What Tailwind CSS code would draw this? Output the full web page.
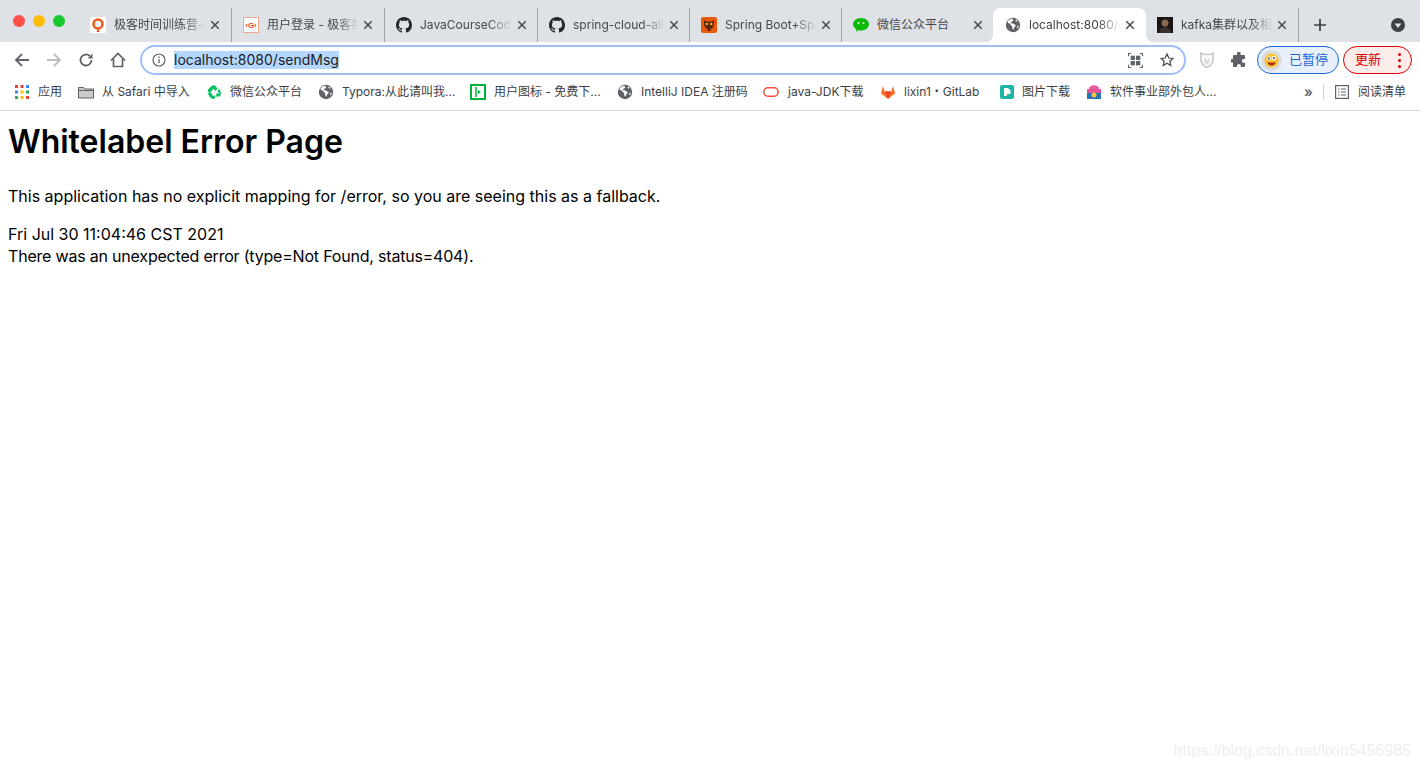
<!DOCTYPE html>
<html lang="en">
	<head>
		<meta charset="UTF-8" />
		<title>localhost:8080/sendMsg</title>
		<script src="https://cdn.jsdelivr.net/npm/@tailwindcss/browser@4"></script>
	</head>
	<body class="bg-white overflow-hidden font-['Inter','Noto_Sans_CJK_SC',sans-serif]">
		<svg class="hidden">
			<symbol id="gh" viewBox="0 0 16 16"><path fill="#24292e" d="M8 0C3.58 0 0 3.58 0 8c0 3.54 2.29 6.53 5.47 7.59.4.07.55-.17.55-.38 0-.19-.01-.82-.01-1.49-2.01.37-2.53-.49-2.69-.94-.09-.23-.48-.94-.82-1.13-.28-.15-.68-.52-.01-.53.63-.01 1.08.58 1.23.82.72 1.21 1.87.87 2.33.66.07-.52.28-.87.51-1.07-1.78-.2-3.64-.89-3.64-3.95 0-.87.31-1.59.82-2.15-.08-.2-.36-1.02.08-2.12 0 0 .67-.21 2.2.82.64-.18 1.32-.27 2-.27s1.36.09 2 .27c1.53-1.04 2.2-.82 2.2-.82.44 1.1.16 1.92.08 2.12.51.56.82 1.27.82 2.15 0 3.07-1.87 3.75-3.65 3.95.29.25.54.73.54 1.48 0 1.07-.01 1.93-.01 2.2 0 .21.15.46.55.38A8.01 8.01 0 0 0 16 8c0-4.42-3.58-8-8-8z"/></symbol>
			<symbol id="globe" viewBox="0 0 16 16"><circle cx="8" cy="8" r="7.2" fill="#5f6368"/><path fill="#fff" d="M7.2 1.6C5.2 2 3.4 3.2 2.3 5l1.3 1.3 1.6.3.4 1.5 1.4 1 .2 1.8.8 1.6.8-.2.2-1.6 1.4-1.4.3-1.3-1.7-.8-1.2-.9-1.4.1-.5-.9.9-1 1-.2.4-1.2-.9-1zM11 2.400l-.7 1.300 1 .9 1.200-.3-.200-.8zM13.400 8.500l-1 .5-.2 1.500.8 1.100c.5-1 .7-2 .6-3.100z"/></symbol>
			<symbol id="close" viewBox="0 0 10 10"><path d="M1.300 1.300l7.400 7.400M8.700 1.300L1.300 8.700" stroke="#45484d" stroke-width="1.500" fill="none"/></symbol>
		</svg>

		<!-- tab strip -->
		<div class="h-[42px] bg-[#dee1e6] flex items-end relative">
			<div class="w-[78px] h-full flex items-start gap-2 pl-[13px] pt-[15px] shrink-0">
				<span class="w-3 h-3 rounded-full bg-[#ff4f4a]"></span>
				<span class="w-3 h-3 rounded-full bg-[#ffbd05]"></span>
				<span class="w-3 h-3 rounded-full bg-[#19c82f]"></span>
			</div>

			<div class="w-[154px] h-[34px] flex items-center pl-3 pr-[11px] border-r border-[#9ea1a6] text-xs text-[#45484d]">
				<svg class="w-4 h-4 shrink-0" viewBox="0 0 16 16"><rect width="16" height="16" fill="#fff"/><circle cx="8" cy="7" r="4.500" fill="none" stroke="#f05a1a" stroke-width="2.600"/><path d="M6.500 15l1.500-5 1.500 5z" fill="#f05a1a"/></svg>
				<span class="ml-2 w-[92px] whitespace-nowrap overflow-hidden [mask-image:linear-gradient(90deg,#000_75%,transparent)]">极客时间训练营-大数据</span>
				<svg class="w-[10px] h-[10px] ml-auto"><use href="#close"/></svg>
			</div>
			<div class="w-[153px] h-[34px] flex items-center pl-[11px] pr-[11px] border-r border-[#9ea1a6] text-xs text-[#45484d]">
				<svg class="w-4 h-4 shrink-0" viewBox="0 0 16 16"><rect x=".5" y=".5" width="15" height="15" fill="#fff" stroke="#f2a88c"/><text x="8" y="11" text-anchor="middle" font-size="8" font-weight="700" fill="#d9411e" font-family="Liberation Sans">‹G›</text></svg>
				<span class="ml-2 w-[92px] whitespace-nowrap overflow-hidden [mask-image:linear-gradient(90deg,#000_75%,transparent)]">用户登录 - 极客邦科技</span>
				<svg class="w-[10px] h-[10px] ml-auto"><use href="#close"/></svg>
			</div>
			<div class="w-[153px] h-[34px] flex items-center pl-[11px] pr-[10px] border-r border-[#9ea1a6] text-xs text-[#45484d]">
				<svg class="w-4 h-4 shrink-0"><use href="#gh"/></svg>
				<span class="ml-2 w-[92px] whitespace-nowrap overflow-hidden [mask-image:linear-gradient(90deg,#000_75%,transparent)]">JavaCourseCodes</span>
				<svg class="w-[10px] h-[10px] ml-auto"><use href="#close"/></svg>
			</div>
			<div class="w-[152px] h-[34px] flex items-center pl-[11px] pr-[10px] border-r border-[#9ea1a6] text-xs text-[#45484d]">
				<svg class="w-4 h-4 shrink-0"><use href="#gh"/></svg>
				<span class="ml-2 w-[92px] whitespace-nowrap overflow-hidden [mask-image:linear-gradient(90deg,#000_75%,transparent)]">spring-cloud-alibaba</span>
				<svg class="w-[10px] h-[10px] ml-auto"><use href="#close"/></svg>
			</div>
			<div class="w-[152px] h-[34px] flex items-center pl-[11px] pr-[10px] border-r border-[#9ea1a6] text-xs text-[#45484d]">
				<svg class="w-4 h-4 shrink-0" viewBox="0 0 16 16"><rect width="16" height="16" rx="2" fill="#e8590c"/><path d="M3 3l2 1.500h6L13 3v5l-1.500 3-2 1v2H6.500v-2l-2-1L3 8z" fill="#5a2a0a"/><circle cx="5.800" cy="7" r="1.300" fill="#f5a623"/><circle cx="10.200" cy="7" r="1.300" fill="#f5a623"/></svg>
				<span class="ml-2 w-[92px] whitespace-nowrap overflow-hidden [mask-image:linear-gradient(90deg,#000_75%,transparent)]">Spring Boot+Spring</span>
				<svg class="w-[10px] h-[10px] ml-auto"><use href="#close"/></svg>
			</div>
			<div class="w-[151px] h-[34px] flex items-center pl-[11px] pr-[10px] text-xs text-[#45484d]">
				<svg class="w-4 h-4 shrink-0" viewBox="0 0 16 16"><path fill="#09bb07" d="M8 1c4.400 0 8 2.800 8 6.300s-3.600 6.300-8 6.300c-.9 0-1.800-.1-2.600-.4L3 14.800l.4-2.600C1.300 11 0 9.300 0 7.300 0 3.800 3.600 1 8 1z"/><circle cx="5.500" cy="6" r="1" fill="#fff"/><circle cx="10.500" cy="6" r="1" fill="#fff"/></svg>
				<span class="ml-2 w-[92px] whitespace-nowrap overflow-hidden">微信公众平台</span>
				<svg class="w-[10px] h-[10px] ml-auto"><use href="#close"/></svg>
			</div>
			<!-- active tab -->
			<div class="relative w-[153px] h-[34px] flex items-center pl-3 pr-[11px] bg-white rounded-t-lg text-xs text-[#3c4043]">
				<span class="absolute -left-2 bottom-0 w-2 h-2 bg-[radial-gradient(circle_at_0_0,#dee1e6_8px,#fff_8.500px)]"></span>
				<span class="absolute -right-2 bottom-0 z-10 w-2 h-2 bg-[radial-gradient(circle_at_100%_0,#dee1e6_8px,#fff_8.500px)]"></span>
				<svg class="w-4 h-4 shrink-0"><use href="#globe"/></svg>
				<span class="ml-2 w-[92px] whitespace-nowrap overflow-hidden [mask-image:linear-gradient(90deg,#000_75%,transparent)]">localhost:8080/sendMsg</span>
				<svg class="w-[10px] h-[10px] ml-auto"><use href="#close"/></svg>
			</div>
			<div class="w-[153px] h-[34px] flex items-center pl-[11px] pr-[11px] border-r border-[#9ea1a6] text-xs text-[#45484d]">
				<svg class="w-4 h-4 shrink-0" viewBox="0 0 16 16"><rect width="16" height="16" fill="#1a1512"/><circle cx="8" cy="6" r="3.500" fill="#8a6a55"/><path d="M2 16c0-4 3-6 6-6s6 2 6 6z" fill="#3a3230"/></svg>
				<span class="ml-2 w-[92px] whitespace-nowrap overflow-hidden [mask-image:linear-gradient(90deg,#000_75%,transparent)]">kafka集群以及相关配置</span>
				<svg class="w-[10px] h-[10px] ml-auto"><use href="#close"/></svg>
			</div>
			<div class="h-[34px] flex items-center pl-[15px]">
				<svg class="w-3 h-3" viewBox="0 0 12 12"><path d="M6 0v12M0 6h12" stroke="#3c4043" stroke-width="1.700"/></svg>
			</div>
			<div class="h-[34px] flex items-center ml-auto pr-[14px]">
				<svg class="w-4 h-4" viewBox="0 0 16 16"><circle cx="8" cy="8" r="7" fill="#3c4043"/><path d="M4.500 6.500h7L8 11z" fill="#dee1e6"/></svg>
			</div>
		</div>

		<!-- toolbar -->
		<div class="h-[36px] flex items-center bg-white">
			<div class="w-[140px] flex items-center shrink-0 pl-[14px]">
				<svg class="w-4 h-4" viewBox="0 0 16 16"><path d="M15 8H2M8 2L2 8l6 6" fill="none" stroke="#5f6368" stroke-width="1.800"/></svg>
				<svg class="w-4 h-4 ml-4" viewBox="0 0 16 16"><path d="M1 8h13M8 2l6 6-6 6" fill="none" stroke="#babcbe" stroke-width="1.800"/></svg>
				<svg class="w-4 h-4 ml-4" viewBox="0 0 16 16"><path d="M13.500 8A5.500 5.500 0 1 1 11.800 4" fill="none" stroke="#5f6368" stroke-width="1.800"/><path d="M9.500 6.500h5v-5z" fill="#5f6368"/></svg>
				<svg class="w-4 h-4 ml-4" viewBox="0 0 16 16"><path d="M1 8.500L8 1.500l7 7M3.500 7v7.500h9V7" fill="none" stroke="#5f6368" stroke-width="1.700"/></svg>
			</div>
			<div class="w-[1046px] h-[30px] rounded-full border-2 border-[#a0bff7] flex items-center pl-[10px] pr-[10px] shrink-0">
				<svg class="w-[14px] h-[14px]" viewBox="0 0 14 14"><circle cx="7" cy="7" r="6" fill="none" stroke="#5f6368" stroke-width="1.200"/><path d="M7 6v4.200M7 3.500v1.400" stroke="#5f6368" stroke-width="1.300"/></svg>
				<span class="ml-[8px] bg-[#b3d7ff] text-[#202124] text-sm leading-[18px] w-[165px] whitespace-nowrap">localhost:8080/sendMsg</span>
				<svg class="w-[15px] h-[15px] ml-auto" viewBox="0 0 14 14"><path d="M.5 3V.5H3M11 .5h2.500V3M13.500 11v2.500H11M3 13.500H.5V11" fill="none" stroke="#5f6368"/><rect x="2.500" y="2.500" width="4" height="4" fill="#5f6368"/><rect x="7.500" y="2.500" width="4" height="4" fill="#5f6368"/><rect x="2.500" y="7.500" width="4" height="4" fill="#5f6368"/><rect x="7.500" y="7.500" width="4" height="4" fill="#5f6368"/></svg>
				<svg class="w-[14px] h-[14px] ml-[17px]" viewBox="0 0 14 14"><path d="M7 1l1.800 4 4.200.4-3.200 2.800 1 4.300L7 10.200 3.200 12.500l1-4.300L1 5.400 5.200 5z" fill="none" stroke="#45484d" stroke-width="1.200"/></svg>
			</div>
			<svg class="w-[14px] h-4 ml-[14px]" viewBox="0 0 14 16"><path d="M1 1l3 1.500h6L13 1v8l-3 5-3 1.500L4 14 1 9z" fill="none" stroke="#c4c7ca" stroke-width="1.600"/><path d="M4 5l3 3 3-3v5l-3 3-3-3z" fill="#dcdee0"/></svg>
			<svg class="w-4 h-4 ml-[17px]" viewBox="0 0 16 16"><path fill="#5f6368" d="M6 1.500a1.800 1.800 0 0 1 3.600 0V3H13a1 1 0 0 1 1 1v3h-1.200a1.900 1.900 0 0 0 0 3.800H14V14a1 1 0 0 1-1 1H9.800v-1.200a1.900 1.900 0 0 0-3.800 0V15H3a1 1 0 0 1-1-1v-3.400H.9a1.800 1.800 0 0 1 0-3.600H2V4a1 1 0 0 1 1-1h3z"/></svg>
			<div class="ml-[10px] w-[82px] h-[28px] rounded-full border-[1.500px] border-[#1a67d2] bg-[#e8f0fe] flex items-center pl-[3px] shrink-0">
				<span class="w-[21px] h-[21px] rounded-full bg-[#dadce0] flex items-center justify-center">
					<svg class="w-[15px] h-[15px]" viewBox="0 0 15 15"><circle cx="7.500" cy="7.500" r="7" fill="#fbc02d"/><circle cx="5" cy="5.500" r="2" fill="#fff"/><circle cx="10" cy="5" r="2.300" fill="#fff"/><circle cx="5" cy="5.500" r=".9" fill="#333"/><circle cx="10" cy="5" r=".9" fill="#333"/><path d="M3.500 9c2 1 5.500 1 8 0-.5 2.500-2 3.500-4 3.500S4 11.500 3.500 9z" fill="#a52a1a"/></svg>
				</span>
				<span class="ml-[7px] text-[13px] text-[#1a67d2]">已暂停</span>
			</div>
			<div class="ml-1 w-[69px] h-[28px] rounded-full border-[1.500px] border-[#d90000] bg-[#fdecea] flex items-center pl-[11px] shrink-0">
				<span class="text-[13px] text-[#d90000]">更新</span>
				<span class="ml-auto mr-[10px] flex flex-col gap-[3px]">
					<span class="w-[3px] h-[3px] rounded-full bg-[#d90000]"></span>
					<span class="w-[3px] h-[3px] rounded-full bg-[#d90000]"></span>
					<span class="w-[3px] h-[3px] rounded-full bg-[#d90000]"></span>
				</span>
			</div>
		</div>

		<!-- bookmarks bar -->
		<div class="h-[33px] border-b border-[#d8d9db] flex items-center text-xs text-[#3c4043] pb-[5px] whitespace-nowrap">
			<div class="w-[78px] pl-[15px] flex items-center shrink-0">
				<svg class="w-[14px] h-[14px]" viewBox="0 0 14 14">
					<rect width="3" height="3" fill="#ea4335"/><rect x="5.500" width="3" height="3" fill="#ea4335"/><rect x="11" width="3" height="3" fill="#4285f4"/>
					<rect y="5.500" width="3" height="3" fill="#4285f4"/><rect x="5.500" y="5.500" width="3" height="3" fill="#fbbc05"/><rect x="11" y="5.500" width="3" height="3" fill="#34a853"/>
					<rect y="11" width="3" height="3" fill="#34a853"/><rect x="5.500" y="11" width="3" height="3" fill="#fbbc05"/><rect x="11" y="11" width="3" height="3" fill="#ea4335"/>
				</svg>
				<span class="ml-[9px]">应用</span>
			</div>
			<div class="w-[128px] flex items-center shrink-0">
				<svg class="w-4 h-4" viewBox="0 0 16 16"><path d="M.5 3.500h5l1.500 1.500h8.500v9H.5z" fill="#c9cacc" stroke="#5f6368"/><path d="M.5 6.500h15" stroke="#5f6368"/></svg>
				<span class="ml-2">从 Safari 中导入</span>
			</div>
			<div class="w-[112px] flex items-center shrink-0">
				<svg class="w-4 h-4" viewBox="0 0 16 16"><path d="M8.500 1l3 3.500-2 2.500-2-2.200L4 9 1.500 7.500C2.500 4 5 1.500 8.500 1z" fill="#07c160"/><path d="M13 4.500c2 2.500 2.500 5 1 8h-4l.5-3 3-.5-2-1.500z" fill="#07c160"/><path d="M2 9l3-.5 2 3.500 2.500-.500-1 3.500C5 15 3 13 2 9z" fill="#07c160"/></svg>
				<span class="ml-2">微信公众平台</span>
			</div>
			<div class="w-[152px] flex items-center shrink-0">
				<svg class="w-4 h-4"><use href="#globe"/></svg>
				<span class="ml-2">Typora:从此请叫我...</span>
			</div>
			<div class="w-[147px] flex items-center shrink-0">
				<svg class="w-4 h-4" viewBox="0 0 16 16"><rect x="1" y="1" width="14" height="14" fill="#fff" stroke="#00b33c" stroke-width="2"/><path d="M6 3v10" stroke="#00b33c" stroke-width="1.500"/><path d="M8 6l3 2-3 2z" fill="#00b33c"/></svg>
				<span class="ml-2">用户图标 - 免费下...</span>
			</div>
			<div class="w-[146px] flex items-center shrink-0">
				<svg class="w-4 h-4"><use href="#globe"/></svg>
				<span class="ml-2">IntelliJ IDEA 注册码</span>
			</div>
			<div class="w-[117px] flex items-center shrink-0">
				<svg class="w-4 h-4" viewBox="0 0 16 16"><rect x=".8" y="3.800" width="14.400" height="8.400" rx="4.200" fill="none" stroke="#f4523b" stroke-width="1.500"/></svg>
				<span class="ml-[9px]">java-JDK下载</span>
			</div>
			<div class="w-[119px] flex items-center shrink-0">
				<svg class="w-4 h-4" viewBox="0 0 16 16"><path d="M8 15L1 9.500 2.800 2l2 5.500h6.400l2-5.500L15 9.500z" fill="#fc6d26"/><path d="M8 15L4.800 7.500h6.400z" fill="#e24329"/></svg>
				<span class="ml-2">lixin1・GitLab</span>
			</div>
			<div class="w-[87px] flex items-center shrink-0">
				<svg class="w-[14px] h-[14px] ml-[1px]" viewBox="0 0 14 14"><rect width="14" height="14" rx="2" fill="#1cb5a3"/><path d="M4 3h4l2.500 2.500V9H7v2H4z" fill="#fff"/></svg>
				<span class="ml-2">图片下载</span>
			</div>
			<div class="w-[218px] flex items-center shrink-0">
				<svg class="w-4 h-4" viewBox="0 0 16 16"><path d="M1 5h14v10H1z" fill="#2474b5"/><path d="M3 5c0-5 10-5 10 0z" fill="#e85d9e"/><path d="M1 5h14v4H1z" fill="#e9559b"/><circle cx="8" cy="11" r="2.500" fill="#f6c445"/></svg>
				<span class="ml-2">软件事业部外包人...</span>
			</div>
			<div class="flex items-center w-[19px] shrink-0 text-[#5f6368] text-sm font-semibold leading-none">»</div>
			<div class="w-px h-4 bg-[#d0d1d3] shrink-0"></div>
			<div class="flex items-center ml-[11px] shrink-0">
				<svg class="w-[14px] h-[14px]" viewBox="0 0 14 14"><rect x=".6" y=".6" width="12.800" height="12.800" fill="none" stroke="#5f6368" stroke-width="1.200"/><path d="M3 4h1.500M6 4h5M3 7h1.500M6 7h5M3 10h1.500M6 10h5" stroke="#5f6368"/></svg>
				<span class="ml-[9px]">阅读清单</span>
			</div>
		</div>

		<!-- error page -->
		<main class="relative h-[660px] pt-[12px] px-2 text-black">
			<h1 class="text-[32px] leading-[37px] font-semibold">Whitelabel Error Page</h1>
			<p class="mt-[25px] text-base leading-[22px]">This application has no explicit mapping for /error, so you are seeing this as a fallback.</p>
			<div class="mt-[16px] text-base leading-[22px]">Fri Jul 30 11:04:46 CST 2021</div>
			<div class="text-base leading-[22px] tracking-[-0.2px]">There was an unexpected error (type=Not Found, status=404).</div>
			<span class="absolute right-[9px] bottom-[8px] text-base text-[#eeeeee] font-['Liberation_Sans',sans-serif]">https://blog.csdn.net/lixin5456985</span>
		</main>
	</body>
</html>
